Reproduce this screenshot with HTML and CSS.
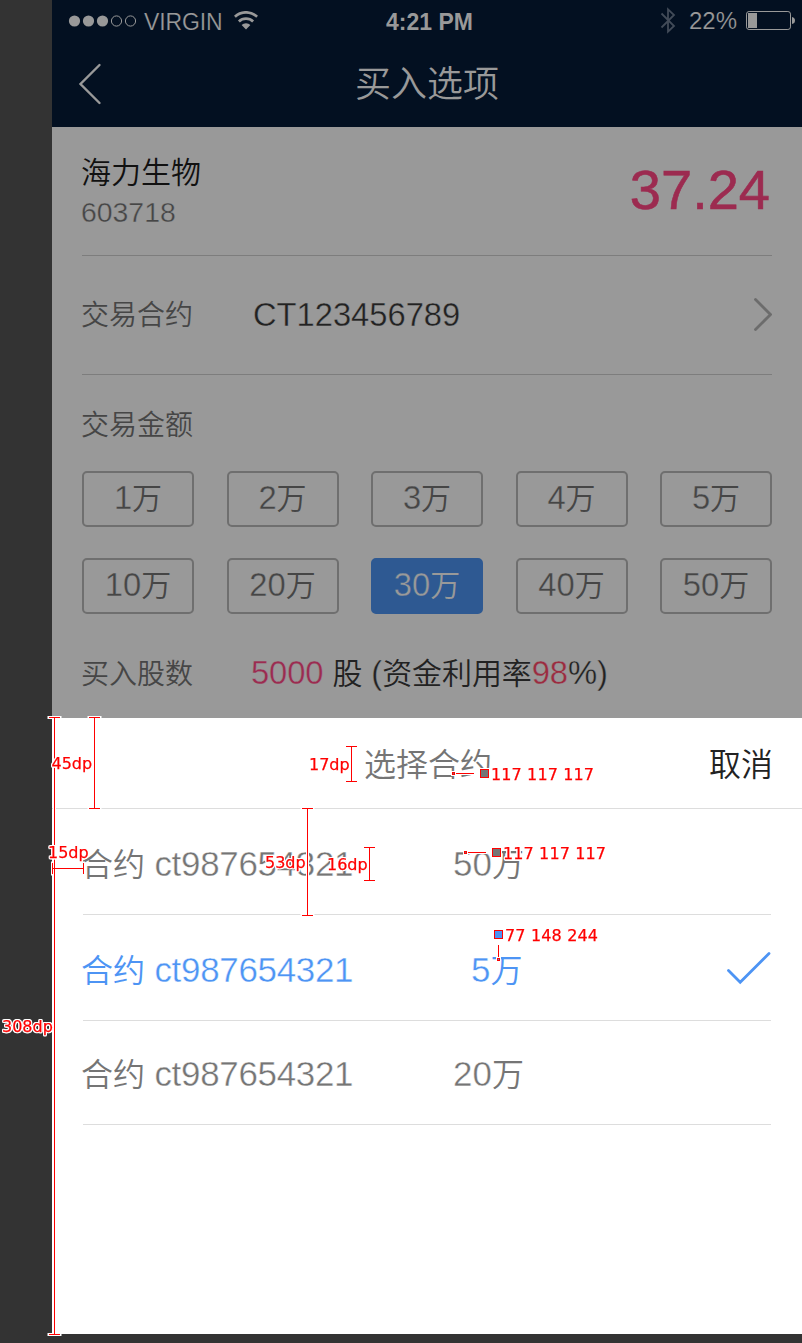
FILE: index.html
```html
<!DOCTYPE html>
<html lang="zh-CN">
<head>
<meta charset="utf-8">
<title>买入选项</title>
<link rel="stylesheet" href="styles.css">
</head>
<body>
<div class="phone">
  <header class="header">
    <div class="status">
      <div class="status-left">
        <svg class="signal" width="68" height="12" viewBox="0 0 68 12"><g fill="#999"><circle cx="6.500" cy="6" r="5.6"/><circle cx="20.500" cy="6" r="5.6"/><circle cx="34.500" cy="6" r="5.6"/></g><g fill="none" stroke="#999"><circle cx="48.500" cy="6" r="5.1"/><circle cx="62.500" cy="6" r="5.1"/></g></svg>
        <span class="carrier">VIRGIN</span>
        <svg class="wifi" width="24" height="19" viewBox="0 0 24 19"><g fill="none" stroke="#999" stroke-width="2.7"><path d="M.9 5.800a16 16 0 0 1 22.2 0"/><path d="M4.9 10.500a10.2 10.2 0 0 1 14.2 0"/></g><path fill="#999" d="M7.6 14a6.3 6.3 0 0 1 8.8 0L12 18.6z"/></svg>
      </div>
      <span class="clock">4:21 PM</span>
      <div class="status-right">
        <svg class="bluetooth" width="16" height="27" viewBox="0 0 16 27"><path fill="none" stroke="#424b58" stroke-width="1.8" d="M1.5 6.5 14 19l-6 5.6V2.4L14 8 1.5 20.5"/></svg>
        <span class="percent">22%</span>
        <svg class="battery" width="50" height="20" viewBox="0 0 50 20"><rect x=".5" y=".5" width="44" height="18" rx="2.6" fill="none" stroke="#999"/><path fill="#999" d="M2 2h9v15H2zM46 6q3 .5 3 3.500t-3 3.500z"/></svg>
      </div>
    </div>
    <div class="nav">
      <svg class="back" width="24" height="42" viewBox="0 0 24 42"><path fill="none" stroke="#999" stroke-width="2.400" stroke-linecap="round" d="M21.500 2 2.500 21l19 19"/></svg>
      <h1 class="nav-title">买入选项</h1>
    </div>
  </header>

  <main class="order">
    <section class="stock">
      <div class="stock-id">
        <div class="stock-name">海力生物</div>
        <div class="stock-code">603718</div>
      </div>
      <div class="price">37.24</div>
    </section>
    <section class="contract">
      <span class="label">交易合约</span>
      <span class="contract-no">CT123456789</span>
      <svg class="chevron" width="20" height="34" viewBox="0 0 20 34"><path fill="none" stroke="#6c6c6c" stroke-width="2.800" stroke-linecap="round" d="M3.500 1.500l15 15L3.500 31.500"/></svg>
    </section>
    <section class="amount">
      <div class="label amount-label">交易金额</div>
      <div class="amount-grid">
        <div class="option"><span class="n">1</span>万</div>
        <div class="option"><span class="n">2</span>万</div>
        <div class="option"><span class="n">3</span>万</div>
        <div class="option"><span class="n">4</span>万</div>
        <div class="option"><span class="n">5</span>万</div>
        <div class="option"><span class="n">10</span>万</div>
        <div class="option"><span class="n">20</span>万</div>
        <div class="option option-on"><span class="n">30</span>万</div>
        <div class="option"><span class="n">40</span>万</div>
        <div class="option"><span class="n">50</span>万</div>
      </div>
    </section>
    <section class="shares">
      <span class="label">买入股数</span>
      <span class="shares-text"><span class="n pink">5000</span><span class="n"> </span>股<span class="n"> (</span>资金利用率<span class="n red">98</span><span class="n">%)</span></span>
    </section>
  </main>

  <section class="sheet">
    <div class="sheet-head">
      <span class="sheet-title">选择合约</span>
      <span class="cancel">取消</span>
    </div>
    <ul class="list">
      <li class="row"><span class="row-name">合约<span class="n"> ct987654321</span></span><span class="row-sum"><span class="n">50</span>万</span></li>
      <li class="row row-on"><span class="row-name">合约<span class="n"> ct987654321</span></span><span class="row-sum"><span class="n">5</span>万</span>
        <svg class="check" width="46" height="34" viewBox="0 0 46 34"><path fill="none" stroke="#4d94f4" stroke-width="2.800" stroke-linecap="round" d="M3.500 19.500 15.200 31.200 44 2.500"/></svg></li>
      <li class="row row-last"><span class="row-name">合约<span class="n"> ct987654321</span></span><span class="row-sum"><span class="n">20</span>万</span></li>
    </ul>
  </section>
</div>

<svg class="marks" width="802" height="1343" viewBox="0 0 802 1343">
  <defs>
    <g id="rules">
      <path d="M49 717.500h11M54.500 717.500v617M49 1334.500h11"/>
      <path d="M89 717.500h11M94.500 717.500v91M89 808.500h11"/>
      <path d="M346 746.500h11M351.500 746.500v35M346 781.500h11"/>
      <path d="M302 808.500h11M307.500 808.500v107M302 915.500h11"/>
      <path d="M364 847.500h11M369.500 847.500v33M364 880.500h11"/>
      <path d="M52.500 863v11M52.500 868.500h31M83.500 863v11"/>
      <path d="M455 773.500h19M467 852.500h19M498.500 945v13"/>
    </g>
  </defs>
  <use href="#rules" class="halo"/>
  <use href="#rules" class="line"/>
  <g class="swatch">
    <rect x="452.500" y="772.500" width="2" height="2" fill="#757575"/>
    <rect x="464.500" y="851.500" width="2" height="2" fill="#757575"/>
    <rect x="497.500" y="958.500" width="2" height="2" fill="#4d94f4"/>
    <rect x="480.500" y="769.500" width="8" height="8" fill="#757575"/>
    <rect x="492.500" y="848.500" width="8" height="8" fill="#757575"/>
    <rect x="494.500" y="930.500" width="8" height="8" fill="#4d94f4"/>
  </g>
  <g class="mark-text">
    <text x="51.500" y="769">45dp</text>
    <text x="309" y="770">17dp</text>
    <text x="48" y="858">15dp</text>
    <text x="265" y="868">53dp</text>
    <text x="327" y="870">16dp</text>
    <text x="2" y="1032">308dp</text>
    <text x="491" y="780" textLength="103">117 117 117</text>
    <text x="503" y="859" textLength="103">117 117 117</text>
    <text x="505" y="941" textLength="93">77 148 244</text>
  </g>
</svg>
</body>
</html>
```
FILE: styles.css
```css
* { box-sizing: border-box; }
body {
  margin: 0;
  width: 802px;
  height: 1343px;
  overflow: hidden;
  position: relative;
  background: #333;
  font-family: "Liberation Sans", "Noto Sans CJK SC", sans-serif;
  font-weight: 350;
}
svg { display: block; flex: none; }
.phone { width: 750px; margin-left: 52px; }

/* digits run slightly larger than the Chinese text beside them */
.n { font-size: 1.092em; line-height: 0; white-space: pre; }

/* a hairline in the surface colour lightens the Latin strokes */
.n, .contract-no, .stock-code { -webkit-text-stroke: .4px #999; }
.carrier, .percent { -webkit-text-stroke: .2px #031021; }

.header { height: 127px; background: #031021; color: #999; }
.status {
  height: 41px;
  display: grid;
  grid-template-columns: 1fr auto 1fr;
  align-items: center;
  padding: 0 6px 0 16px;
  line-height: 38px;
}
.status-left, .status-right { display: flex; align-items: center; }
.status-right { justify-content: flex-end; }
.carrier { margin-left: 8px; padding-top: 2px; font-size: 23px; letter-spacing: -.1px; }
.wifi { margin-left: 11px; }
.clock { padding-top: 2px; font-size: 23px; font-weight: 700; margin-left: -5px; }
.percent { margin: 0 9px 0 13px; padding-top: 1px; font-size: 24px; }
.nav {
  height: 86px;
  display: grid;
  grid-template-columns: 60px 1fr 60px;
  align-items: center;
  padding: 0 0 0 26px;
}
.nav-title { margin: 0 26px 0 0; padding-top: 1px; text-align: center; font-size: 36px; font-weight: 350; line-height: 85px; }

.order { height: 591px; padding: 0 30px; background: #999; color: #222; }
.stock {
  height: 129px;
  border-bottom: 1px solid #7d7d7d;
  display: flex;
  justify-content: space-between;
}
.stock-id { padding-top: 26px; margin-left: -1px; }
.stock-name { font-size: 30px; line-height: 40px; color: #111; }
.stock-code { font-size: 28.400px; line-height: 38px; color: #464646; }
.price { margin-right: 2px; font-size: 56px; line-height: 126px; color: #9c2b50; -webkit-text-stroke: .6px #9c2b50; }
.label { font-size: 28px; color: #464646; margin-left: -1px; }
.contract { height: 119px; border-bottom: 1px solid #7d7d7d; display: flex; align-items: center; }
.contract .label { width: 172px; padding-bottom: 4px; }
.contract-no { flex: 1; font-size: 32.700px; }
.shares .label { width: 170px; }
.amount { padding-top: 31px; }
.amount-label { line-height: 40px; }
.amount-grid {
  display: grid;
  grid-template-columns: repeat(5, 112px);
  justify-content: space-between;
  row-gap: 31px;
  margin-top: 25px;
}
.option {
  height: 56px;
  border: 2px solid #6f6f6f;
  border-radius: 5px;
  text-align: center;
  font-size: 30px;
  line-height: 52px;
  color: #464646;
}
.option-on { border-color: #2e5992; background: #2e5992; color: #999; }
.option-on .n { -webkit-text-stroke-color: #2e5992; }
.shares { display: flex; align-items: baseline; margin-top: 40px; line-height: 40px; }
.shares-text { font-size: 30px; letter-spacing: -.1px; white-space: nowrap; }
.pink { color: #9c2b50; }
.red { color: #9c2b3f; }

.sheet { height: 616px; background: #fff; color: #757575; font-size: 32px; }
.sheet .n { -webkit-text-stroke-color: #fff; }
.sheet-head {
  height: 91px;
  padding: 3px 29px 0 31px;
  border-bottom: 1px solid #ddd;
  display: grid;
  grid-template-columns: 1fr auto 1fr;
  line-height: 88px;
}
.sheet-title { grid-column: 2; }
.cancel { text-align: right; color: #222; }
.list { list-style: none; margin: 0; padding: 0 31px; }
.row {
  height: 106px;
  display: flex;
  align-items: center;
  padding-top: 1px;
  border-bottom: 1px solid #ddd;
}
.row-last { height: 104px; padding: 0 0 2px; }
.row-name { width: 372px; margin-left: -2px; white-space: nowrap; }
.row-name .n { letter-spacing: -.3px; }
.row-sum { flex: 1; }
.row-on { color: #4d94f4; }
.row-on .row-sum { padding-left: 18px; }

.marks { position: absolute; left: 0; top: 0; }
.halo { fill: none; stroke: #fff; stroke-width: 3; stroke-linecap: square; }
.line { fill: none; stroke: #f00; stroke-width: 1; }
.swatch { stroke: #f00; stroke-width: 1; }
.mark-text {
  font: 400 16px "DejaVu Sans", sans-serif;
  fill: #f00;
  stroke: #f00;
  stroke-width: .25px;
}
.swatch, .mark-text {
  filter: drop-shadow(1px 0 0 #fff) drop-shadow(-1px 0 0 #fff) drop-shadow(0 1px 0 #fff) drop-shadow(0 -1px 0 #fff);
}
```
